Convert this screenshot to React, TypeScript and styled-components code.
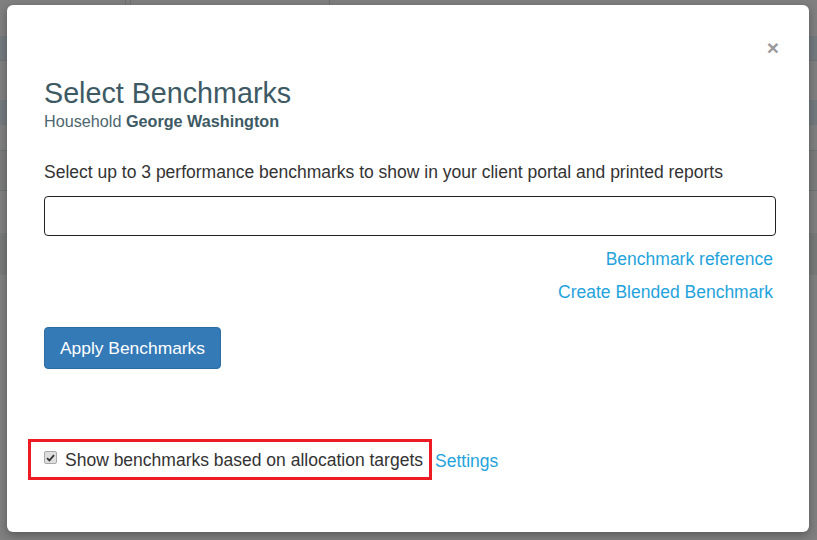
import styled, { createGlobalStyle } from "styled-components";

const GlobalStyle = createGlobalStyle`
  html, body {
    margin: 0;
    padding: 0;
    background: #7f7f7f;
  }
  body {
    font-family: "Liberation Sans", Arial, sans-serif;
    overflow: hidden;
  }
`;

const Screen = styled.div`
  position: relative;
  width: 817px;
  height: 540px;
  overflow: hidden;
  background: #7f7f7f;
`;

const Page = styled.div`
  display: flex;
  flex-direction: column;
`;

const TopBar = styled.div`
  height: 5px;
  display: flex;
`;

const TopCell = styled.div<{ $w: number }>`
  width: ${(p) => p.$w}px;
  border-right: 1px solid #6c7074;
`;

const BandRow = styled.div<{ $h: number; $tone: string; $line?: boolean }>`
  height: ${(p) => p.$h}px;
  background: ${(p) => p.$tone};
  border-bottom: ${(p) => (p.$line ? "1px solid #6e7276" : "none")};
`;

const Modal = styled.div`
  position: absolute;
  top: 5px;
  left: 7px;
  width: 802px;
  height: 527px;
  background: #fff;
  border-radius: 6px;
  box-shadow: 0 3px 9px rgba(0, 0, 0, 0.3);
  box-sizing: border-box;
  padding: 0 33px 0 37px;
  display: flex;
  flex-direction: column;
`;

const CloseButton = styled.button`
  position: absolute;
  top: 32px;
  right: 30px;
  border: 0;
  background: none;
  padding: 0;
  color: #9a9a9a;
  font-family: "Liberation Sans", Arial, sans-serif;
  font-size: 21px;
  font-weight: bold;
  line-height: 1;
  cursor: pointer;
`;

const Header = styled.div`
  margin-top: 73px;
  display: flex;
  flex-direction: column;
`;

const Title = styled.h2`
  margin: 0;
  font-size: 28.7px;
  font-weight: normal;
  line-height: 31px;
  color: #3d5a64;
`;

const Subtitle = styled.div`
  margin-top: 2px;
  font-size: 16.2px;
  line-height: 20px;
  color: #4d6670;
  b {
    color: #3d5a64;
  }
`;

const Description = styled.p`
  margin: 30px 0 0;
  font-size: 17.5px;
  line-height: 22px;
  color: #333;
`;

const SearchBox = styled.input`
  margin-top: 13px;
  height: 40px;
  box-sizing: border-box;
  border: 1px solid #222;
  border-radius: 4px;
  padding: 0 10px;
  font-size: 16px;
  outline: none;
`;

const LinkList = styled.div`
  margin-top: 12px;
  display: flex;
  flex-direction: column;
  align-items: flex-end;
  gap: 11px;
  padding-right: 3px;
`;

const Link = styled.a`
  font-size: 17.5px;
  line-height: 22px;
  color: #1fa3dc;
  text-decoration: none;
  cursor: pointer;
`;

const PrimaryButton = styled.button`
  margin-top: 24px;
  align-self: flex-start;
  height: 42px;
  padding: 0 15px;
  background: #337ab7;
  border: 1px solid #2e6da4;
  border-radius: 4px;
  color: #fff;
  font-family: "Liberation Sans", Arial, sans-serif;
  font-size: 17.4px;
  cursor: pointer;
`;

const OptionRow = styled.div`
  margin-top: 70px;
  margin-left: -16px;
  display: flex;
  align-items: center;
`;

const Highlight = styled.label`
  display: flex;
  align-items: center;
  gap: 8px;
  height: 41px;
  box-sizing: border-box;
  padding: 2px 6px 0 13px;
  border: 3px solid #ed1c24;
  font-size: 17.5px;
  color: #333;
`;

const Check = styled.span`
  width: 13px;
  height: 13px;
  box-sizing: border-box;
  border: 1px solid #a9a9a9;
  border-radius: 2px;
  background: #dedede;
  display: flex;
  align-items: center;
  justify-content: center;
  margin-top: -6px;
`;

const SettingsLink = styled(Link)`
  margin-left: 3px;
  padding-top: 2px;
`;

const bands: { h: number; tone: string; line?: boolean }[] = [
  { h: 31, tone: "#7f7f7f" },
  { h: 24, tone: "#737a7e", line: true },
  { h: 39, tone: "#7f7f7f" },
  { h: 25, tone: "#737a7e" },
  { h: 25, tone: "#7f7f7f", line: true },
  { h: 39, tone: "#7b7b7b", line: true },
  { h: 42, tone: "#7f7f7f" },
  { h: 42, tone: "#777878" },
  { h: 300, tone: "#7f7f7f" },
];

const App = () => {
  return (
    <Screen>
      <GlobalStyle />
      <Page>
        <TopBar>
          <TopCell $w={125} />
          <TopCell $w={4} />
          <TopCell $w={198} />
        </TopBar>
        {bands.map((b, i) => (
          <BandRow key={i} $h={b.h} $tone={b.tone} $line={b.line} />
        ))}
      </Page>

      <Modal>
        <CloseButton aria-label="Close">×</CloseButton>
        <Header>
          <Title>Select Benchmarks</Title>
          <Subtitle>
            Household <b>George Washington</b>
          </Subtitle>
        </Header>

        <Description>
          Select up to 3 performance benchmarks to show in your client portal and printed reports
        </Description>
        <SearchBox type="text" />

        <LinkList>
          <Link>Benchmark reference</Link>
          <Link>Create Blended Benchmark</Link>
        </LinkList>

        <PrimaryButton>Apply Benchmarks</PrimaryButton>

        <OptionRow>
          <Highlight>
            <Check>
              <svg width="9" height="8" viewBox="0 0 9 8">
                <path d="M1 4.2 L3.4 6.5 L8 1.2" fill="none" stroke="#333" strokeWidth="1.8" />
              </svg>
            </Check>
            Show benchmarks based on allocation targets
          </Highlight>
          <SettingsLink>Settings</SettingsLink>
        </OptionRow>
      </Modal>
    </Screen>
  );
};

export default App;
